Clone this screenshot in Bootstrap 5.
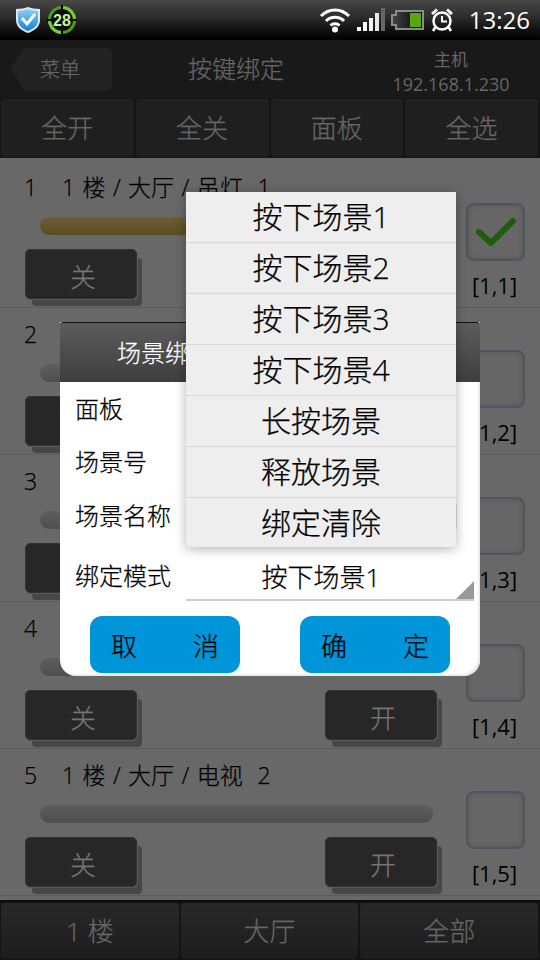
<!DOCTYPE html>
<html lang="zh-CN">
<head>
    <meta charset="UTF-8">
    <title>按键绑定</title>
    <link href="https://cdn.jsdelivr.net/npm/bootstrap@5.3.0/dist/css/bootstrap.min.css" rel="stylesheet">
    <style>
        html, body {
            margin: 0;
            height: 100%;
            overflow: hidden;
            background: #686868;
        }

        .screen {
            width: 540px;
            height: 960px;
            position: relative;
            overflow: hidden;
            font-family: "Open Sans", "Noto Sans CJK SC", sans-serif;
            font-weight: 300;
            -webkit-text-stroke: .25px;
            color: #000;
        }

        /* status bar */
        .status-bar {
            height: 40px;
            padding: 0 10px 0 15px;
            background: linear-gradient(#474747 0, #2e2e2e 16px, #111 30px, #000 40px);
            color: #fff;
            -webkit-text-stroke: 0;
        }

        .status-time {
            font-size: 24px;
            font-weight: 400;
            line-height: 40px;
            margin-left: 15px;
        }

        .ring-icon {
            margin-left: 6px;
        }

        .signal-icon {
            margin-left: 6px;
        }

        .batt-icon {
            margin-left: 5px;
        }

        .alarm-icon {
            margin-left: 6px;
        }

        /* title bar */
        .title-bar {
            height: 58px;
            background: #191919;
            color: #666;
        }

        .back-btn {
            position: relative;
            width: 88px;
            height: 43px;
            margin-left: 24px;
            background: #222;
            border-radius: 0 5px 5px 0;
            color: #666;
            font-size: 20px;
            line-height: 43px;
            padding-left: 16px;
        }

        .back-btn::before {
            content: "";
            position: absolute;
            left: -14px;
            top: 0;
            border-style: solid;
            border-width: 21.5px 14px 21.5px 0;
            border-color: transparent #222 transparent transparent;
        }

        .title-text {
            width: 261px;
            font-size: 24px;
            padding-left: 76px;
        }

        .host-box {
            width: 156px;
            margin-top: 6px;
            text-align: center;
            font-size: 17px;
            font-weight: 400;
            -webkit-text-stroke: 0;
            line-height: 25px;
            color: #666;
        }

        .host-ip {
            font-size: 18px;
        }

        /* top and bottom tabs */
        .tab-bar {
            height: 60px;
            gap: 2px;
            background: #141414;
            padding: 1px 2px 1px 1px;
        }

        .tab-btn {
            flex: 1 1 0;
            font-size: 26px;
            color: #666;
            background: #1f1f1f;
            border-radius: 4px;
            box-shadow: inset 0 1px 0 #262626;
        }

        .tab-bar-bottom {
            border-top: 2px solid #0c0c0c;
            padding-top: 1px;
        }

        .tab-bar-bottom .tab-btn {
            background: linear-gradient(#282828, #1d1d1d);
        }

        /* list */
        .item-list {
            height: 742px;
            padding-top: 3px;
            background: #686868;
        }

        .list-item {
            height: 147px;
            border-bottom: 1px solid #5b5b5b;
        }

        .item-main {
            width: 466px;
            flex: none;
        }

        .item-title {
            height: 52px;
            line-height: 52px;
            padding-left: 24px;
            font-size: 23px;
            word-spacing: 1.4px;
            white-space: pre;
        }

        .item-no {
            display: inline-block;
            width: 38px;
        }

        .track {
            height: 18px;
            margin: 4px 33px 0 40px;
            border-radius: 9px;
            background: linear-gradient(#5e5e5e, #4e4e4e);
        }

        .track-on {
            background: linear-gradient(#6e5e33, #5a4c24);
        }

        .item-buttons {
            margin: 14px 29px 0 25px;
        }

        .key-btn {
            width: 112px;
            height: 50px;
            padding-left: 4px;
            background: #272727;
            border: 1px solid #333;
            border-radius: 5px;
            box-shadow: 1px 1px 0 #5a5a5a, 6px 8px 0 -1px #474747;
            color: #767676;
            font-size: 26px;
            line-height: 55px;
            text-align: center;
        }

        .check-box {
            width: 59px;
            height: 58px;
            margin-top: 42px;
            border: 2px solid #4a5660;
            border-radius: 8px;
            background: #666;
            box-shadow: inset 0 0 4px #555;
        }

        .check-label {
            width: 57px;
            margin-top: 9px;
            text-align: center;
            font-size: 22px;
            font-weight: 400;
            -webkit-text-stroke: 0;
            line-height: 30px;
        }

        /* dialog */
        .bind-dialog {
            position: absolute;
            left: 60px;
            top: 322px;
            width: 420px;
            height: 354px;
            background: #fff;
            border-radius: 0 0 16px 16px;
            box-shadow: inset -3px -3px 3px -2px #ddd;
        }

        .dialog-head {
            height: 60px;
            padding-left: 57px;
            line-height: 60px;
            font-size: 24px;
            color: #fff;
            border-top: 1px solid #111;
            border-radius: 3px 3px 0 0;
            background: linear-gradient(#5c5c5c, #3e3e3e);
        }

        .dialog-row {
            height: 34px;
            padding-left: 15px;
            font-size: 24px;
            line-height: 34px;
        }

        .row-panel {
            margin-top: 10px;
        }

        .row-scene {
            margin-top: 19px;
        }

        .row-name {
            margin-top: 20px;
        }

        .row-mode {
            margin-top: 26px;
        }

        .name-input {
            width: 269px;
            height: 26px;
            margin-left: 17px;
            border: 1px solid #ddd;
        }

        .mode-select {
            position: absolute;
            left: 126px;
            top: 233px;
            width: 288px;
            height: 46px;
            border-bottom: 2px solid #ccc;
            padding-right: 18px;
            font-size: 26px;
            line-height: 44px;
            text-align: center;
        }

        .mode-select::after {
            content: "";
            position: absolute;
            right: 0;
            bottom: 0;
            border-style: solid;
            border-width: 0 0 18px 18px;
            border-color: transparent transparent #999 transparent;
        }

        .dialog-btn {
            width: 150px;
            height: 57px;
            padding: 0 21px;
            background: #0094d9;
            border-radius: 12px;
            font-size: 26px;
            line-height: 61px;
        }

        .dialog-actions {
            position: absolute;
            left: 30px;
            top: 294px;
            gap: 60px;
        }

        /* popup menu */
        .mode-menu {
            position: absolute;
            left: 186px;
            top: 192px;
            width: 270px;
            height: 355px;
            background: #eee;
            border-radius: 0 0 4px 4px;
            box-shadow: 0 2px 12px rgba(0, 0, 0, .3);
        }

        .mode-menu div {
            height: 51px;
            line-height: 50px;
            border-bottom: 1px solid #d6d6d6;
            text-align: center;
            font-size: 30px;
        }

        .mode-menu div:last-child {
            height: 49px;
            border-bottom: 0;
        }
    </style>
</head>
<body>
<div class="screen">

    <!-- Status bar -->
    <div class="status-bar d-flex align-items-center">
        <svg width="26" height="28" viewBox="0 0 26 28">
            <defs>
                <linearGradient id="shieldFill" x1="0" y1="0" x2="0" y2="1">
                    <stop offset="0" stop-color="#8fd0f7"/>
                    <stop offset="1" stop-color="#0f7fd8"/>
                </linearGradient>
            </defs>
            <path d="M1 3 C6 3 10 2 13 1 C16 2 20 3 25 3 L25 14 C25 21 19 25 13 27 C7 25 1 21 1 14 Z" fill="#dfe9f0"/>
            <path d="M3 5 C7 5 10 4 13 3 C16 4 19 5 23 5 L23 14 C23 20 18 23 13 25 C8 23 3 20 3 14 Z" fill="url(#shieldFill)"/>
            <path d="M7 12 L12 18 L20 8" fill="none" stroke="#fff" stroke-width="3"/>
        </svg>
        <svg class="ring-icon" width="30" height="30" viewBox="0 0 30 30">
            <circle cx="15" cy="15" r="12.5" fill="#0a0a0a" stroke="#4d9a1f" stroke-width="3"/>
            <path d="M15 2.5 A12.5 12.5 0 0 1 27.5 15 M15 27.5 A12.5 12.5 0 0 1 2.5 15" fill="none" stroke="#6fd02c" stroke-width="3"/>
            <path d="M15 0 V5 M15 25 V30 M0 15 H5 M25 15 H30" stroke="#000" stroke-width="2"/>
            <text x="15" y="21" text-anchor="middle" font-family="Liberation Sans" font-weight="700" font-size="16" fill="#c6f58c">28</text>
        </svg>
        <div class="flex-grow-1"></div>
        <svg width="32" height="26" viewBox="0 0 32 26">
            <path d="M2 9 C10 1 22 1 30 9 M7 14 C12 9 20 9 25 14 M11.5 18.5 C14 16 18 16 20.5 18.5" fill="none" stroke="#fff" stroke-width="3"/>
            <circle cx="16" cy="22.5" r="3" fill="#fff"/>
        </svg>
        <svg class="signal-icon" width="29" height="24" viewBox="0 0 29 24">
            <rect x="0" y="19" width="4" height="4" fill="#fff"/>
            <rect x="6" y="14" width="4" height="9" fill="#fff"/>
            <rect x="12" y="10" width="4" height="13" fill="#f2f2f2"/>
            <rect x="18" y="5" width="4" height="18" fill="#e8e8e8"/>
            <rect x="24" y="0" width="4" height="23" fill="#666"/>
        </svg>
        <svg class="batt-icon" width="33" height="20" viewBox="0 0 33 20">
            <defs>
                <linearGradient id="battFill" x1="0" y1="0" x2="1" y2="0">
                    <stop offset="0" stop-color="#444"/>
                    <stop offset="1" stop-color="#000"/>
                </linearGradient>
            </defs>
            <path d="M5 1 H32 V19 H5 V15 H1 V5 H5 Z" fill="url(#battFill)" stroke="#8a8a8a" stroke-width="2"/>
            <rect x="19" y="3" width="11" height="14" fill="#55a80f"/>
        </svg>
        <svg class="alarm-icon" width="24" height="26" viewBox="0 0 24 26">
            <circle cx="12" cy="14" r="8.5" fill="none" stroke="#fff" stroke-width="2.5"/>
            <path d="M12 9 V14.5 H17" fill="none" stroke="#fff" stroke-width="2"/>
            <path d="M1 6 L6 1.5 L8 3.5 L3 8 Z M23 6 L18 1.5 L16 3.5 L21 8 Z" fill="#fff"/>
            <path d="M5.5 20 L3 24 M18.5 20 L21 24" stroke="#fff" stroke-width="2.5"/>
        </svg>
        <div class="status-time">13:26</div>
    </div>

    <!-- Title bar -->
    <div class="title-bar d-flex align-items-center">
        <div class="back-btn">菜单</div>
        <div class="title-text">按键绑定</div>
        <div class="host-box">主机<div class="host-ip">192.168.1.230</div></div>
    </div>

    <!-- Top tabs -->
    <div class="tab-bar d-flex">
        <div class="tab-btn d-flex align-items-center justify-content-center">全开</div>
        <div class="tab-btn d-flex align-items-center justify-content-center">全关</div>
        <div class="tab-btn d-flex align-items-center justify-content-center">面板</div>
        <div class="tab-btn d-flex align-items-center justify-content-center">全选</div>
    </div>

    <!-- List -->
    <div class="item-list overflow-hidden">
        <div class="list-item d-flex">
            <div class="item-main">
                <div class="item-title"><span class="item-no">1</span>1 楼 / 大厅 / 吊灯  1</div>
                <div class="track track-on"></div>
                <div class="item-buttons d-flex justify-content-between">
                    <div class="key-btn">关</div>
                    <div class="key-btn">开</div>
                </div>
            </div>
            <div>
                <div class="check-box d-flex align-items-center justify-content-center">
                    <svg width="42" height="32" viewBox="0 0 42 32">
                        <path d="M4 16 L16 27 L38 5" fill="none" stroke="#1f5c0c" stroke-width="6" stroke-linecap="round" stroke-linejoin="round"/>
                    </svg>
                </div>
                <div class="check-label">[1,1]</div>
            </div>
        </div>
        <div class="list-item d-flex">
            <div class="item-main">
                <div class="item-title"><span class="item-no">2</span>1 楼 / 大厅 / 吊灯  2</div>
                <div class="track"></div>
                <div class="item-buttons d-flex justify-content-between">
                    <div class="key-btn">关</div>
                    <div class="key-btn">开</div>
                </div>
            </div>
            <div>
                <div class="check-box"></div>
                <div class="check-label">[1,2]</div>
            </div>
        </div>
        <div class="list-item d-flex">
            <div class="item-main">
                <div class="item-title"><span class="item-no">3</span>1 楼 / 大厅 / 吊灯  3</div>
                <div class="track"></div>
                <div class="item-buttons d-flex justify-content-between">
                    <div class="key-btn">关</div>
                    <div class="key-btn">开</div>
                </div>
            </div>
            <div>
                <div class="check-box"></div>
                <div class="check-label">[1,3]</div>
            </div>
        </div>
        <div class="list-item d-flex">
            <div class="item-main">
                <div class="item-title"><span class="item-no">4</span>1 楼 / 大厅 / 电视  1</div>
                <div class="track"></div>
                <div class="item-buttons d-flex justify-content-between">
                    <div class="key-btn">关</div>
                    <div class="key-btn">开</div>
                </div>
            </div>
            <div>
                <div class="check-box"></div>
                <div class="check-label">[1,4]</div>
            </div>
        </div>
        <div class="list-item d-flex">
            <div class="item-main">
                <div class="item-title"><span class="item-no">5</span>1 楼 / 大厅 / 电视  2</div>
                <div class="track"></div>
                <div class="item-buttons d-flex justify-content-between">
                    <div class="key-btn">关</div>
                    <div class="key-btn">开</div>
                </div>
            </div>
            <div>
                <div class="check-box"></div>
                <div class="check-label">[1,5]</div>
            </div>
        </div>
    </div>

    <!-- Bottom tabs -->
    <div class="tab-bar tab-bar-bottom d-flex">
        <div class="tab-btn d-flex align-items-center justify-content-center">1 楼</div>
        <div class="tab-btn d-flex align-items-center justify-content-center">大厅</div>
        <div class="tab-btn d-flex align-items-center justify-content-center">全部</div>
    </div>

    <!-- Dialog -->
    <div class="bind-dialog">
        <div class="dialog-head">场景绑定</div>
        <div class="dialog-row row-panel">面板</div>
        <div class="dialog-row row-scene">场景号</div>
        <div class="dialog-row row-name d-flex align-items-center">场景名称<div class="name-input"></div></div>
        <div class="dialog-row row-mode">绑定模式</div>
        <div class="mode-select">按下场景1</div>
        <div class="dialog-actions d-flex">
            <div class="dialog-btn d-flex justify-content-between"><span>取</span><span>消</span></div>
            <div class="dialog-btn d-flex justify-content-between"><span>确</span><span>定</span></div>
        </div>
    </div>

    <!-- Popup menu -->
    <div class="mode-menu">
        <div>按下场景1</div>
        <div>按下场景2</div>
        <div>按下场景3</div>
        <div>按下场景4</div>
        <div>长按场景</div>
        <div>释放场景</div>
        <div>绑定清除</div>
    </div>

</div>

<script src="https://cdn.jsdelivr.net/npm/bootstrap@5.3.0/dist/js/bootstrap.bundle.min.js"></script>
</body>
</html>
